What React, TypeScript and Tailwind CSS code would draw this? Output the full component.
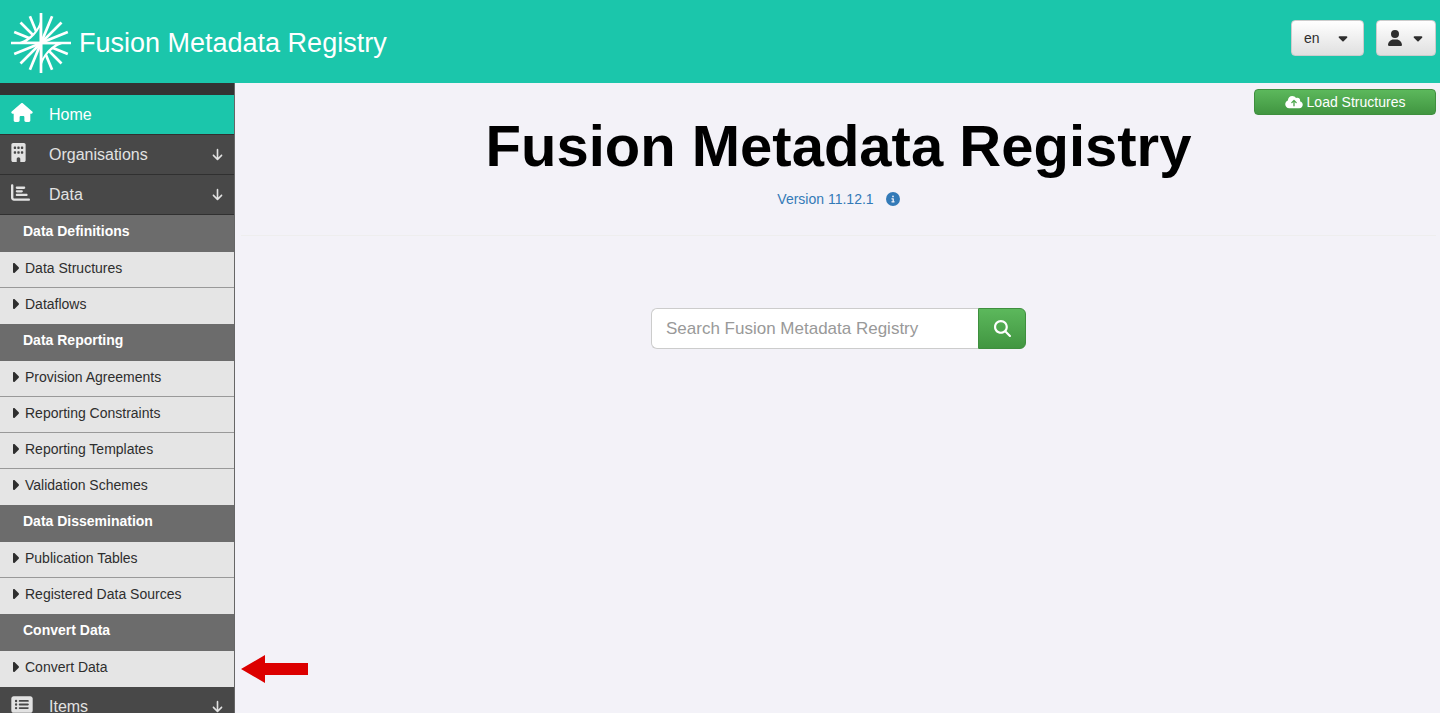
import type { ReactNode } from 'react';
import {
  FaArrowDown,
  FaBuilding,
  FaCaretDown,
  FaCaretRight,
  FaChartBar,
  FaCircleInfo,
  FaCloudArrowUp,
  FaHouse,
  FaMagnifyingGlass,
  FaRectangleList,
  FaUser,
} from 'react-icons/fa6';

interface Section {
  title: string;
  items: string[];
}

const DATA_SECTIONS: Section[] = [
  { title: 'Data Definitions', items: ['Data Structures', 'Dataflows'] },
  {
    title: 'Data Reporting',
    items: [
      'Provision Agreements',
      'Reporting Constraints',
      'Reporting Templates',
      'Validation Schemes',
    ],
  },
  { title: 'Data Dissemination', items: ['Publication Tables', 'Registered Data Sources'] },
  { title: 'Convert Data', items: ['Convert Data'] },
];

const RAYS = [22.5, 45, 67.5, 112.5, 135, 157.5, 202.5, 225, 247.5, 292.5, 315, 337.5];

function Logo() {
  return (
    <svg viewBox="0 0 60 60" className="size-[60px] shrink-0" aria-hidden="true">
      <g stroke="#fff" strokeWidth="2.7">
        {RAYS.map((a) => (
          <line key={a} x1="30" y1="27" x2="30" y2="1" transform={`rotate(${a} 30 30)`} />
        ))}
      </g>
      <circle cx="30" cy="30" r="6" fill="#fff" />
      {/* the two swept blades, each cut out in the header colour */}
      <path d="M30 2C29.5 16 19 26 6 30H30Z" fill="#fff" />
      <path d="M28.7 14.5C26 20 21.5 25 15.5 28.7H28.7Z" fill="#1bc6ab" />
      <path d="M30 58C30.5 44 41 34 54 30H30Z" fill="#fff" />
      <path d="M31.3 45.5C34 40 38.5 35 44.5 31.3H31.3Z" fill="#1bc6ab" />
      <path d="M30 0V60M0 30H60" stroke="#fff" strokeWidth="2.7" />
    </svg>
  );
}

function MenuItem({ icon, label, active }: { icon: ReactNode; label: string; active?: boolean }) {
  return (
    <a
      href="#"
      className={
        'flex h-10 items-center border-b border-[#303030] pr-2.5 pl-[11px] text-base ' +
        (active ? 'bg-[#1bc6ab] text-white' : 'bg-[#484848] text-[#e2e2e2]')
      }
    >
      <span className="w-[38px] pb-1">{icon}</span>
      <span className="flex-1">{label}</span>
      {!active && <FaArrowDown className="text-[13px]" />}
    </a>
  );
}

function PointerArrow() {
  return (
    <svg
      viewBox="0 0 67 28"
      className="absolute top-1/2 left-full ml-[7px] h-7 w-[67px] -translate-y-1/2"
      aria-hidden="true"
    >
      <path d="M0 14L24 0V8H67V20H24V28Z" fill="#dc0000" />
    </svg>
  );
}

function SubMenu({ sections }: { sections: Section[] }) {
  return (
    <div className="text-sm">
      {sections.map((s) => (
        <section key={s.title}>
          <h2 className="flex h-[37px] items-center bg-[#6c6c6c] pb-1.5 pl-[23px] font-bold text-white">
            {s.title}
          </h2>
          <ul className="divide-y divide-[#999]">
            {s.items.map((item) => (
              <li key={item} className="relative h-9 bg-[#e5e5e5]">
                <a href="#" className="flex h-full items-center pb-1 pl-2.5 text-[#2e2e2e]">
                  <span className="w-[15px]">
                    <FaCaretRight className="h-4 w-2.5" />
                  </span>
                  {item}
                </a>
                {item === 'Convert Data' && <PointerArrow />}
              </li>
            ))}
          </ul>
        </section>
      ))}
    </div>
  );
}

function Header() {
  return (
    <header className="flex h-[83px] shrink-0 items-center justify-between bg-[#1bc6ab] pr-1 pl-[11px]">
      <div className="flex items-center gap-2 pt-0.5 text-[27px] text-white">
        <Logo />
        <span className="pt-0.5">Fusion Metadata Registry</span>
      </div>
      <div className="flex gap-3 pb-2 text-sm text-[#2e2e2e]">
        <div className="relative">
          <select
            aria-label="Language"
            className="h-9 w-[73px] appearance-none rounded border border-[#ccc] bg-linear-to-b from-white to-[#e0e0e0] px-3"
          >
            <option>en</option>
          </select>
          <FaCaretDown className="pointer-events-none absolute top-1/2 right-3.5 -translate-y-1/2" />
        </div>
        <button
          type="button"
          aria-label="Account"
          className="flex h-9 w-[60px] items-center justify-between rounded border border-[#ccc] bg-linear-to-b from-white to-[#e0e0e0] px-2.5"
        >
          <FaUser className="size-4" />
          <FaCaretDown />
        </button>
      </div>
    </header>
  );
}

function Sidebar() {
  return (
    <nav className="w-[235px] shrink-0 border-r border-[#666] bg-[#333] pt-3">
      <MenuItem icon={<FaHouse className="h-[19px] w-[22px]" />} label="Home" active />
      <MenuItem icon={<FaBuilding className="h-[19px] w-[15px]" />} label="Organisations" />
      <MenuItem icon={<FaChartBar className="size-[19px]" />} label="Data" />
      <SubMenu sections={DATA_SECTIONS} />
      <MenuItem icon={<FaRectangleList className="h-[19px] w-[22px]" />} label="Items" />
    </nav>
  );
}

export default function App() {
  return (
    <div className="flex h-screen flex-col overflow-hidden bg-[#f3f2f8] font-['Liberation_Sans',Arial,sans-serif]">
      <Header />
      <div className="flex min-h-0 flex-1">
        <Sidebar />
        <main className="flex min-w-0 flex-1 flex-col pt-1.5 pr-1 pl-1.5">
          <button
            type="button"
            className="flex h-[26px] w-[182px] items-center justify-center gap-1 self-end rounded-sm border border-[#3e8f3e] bg-linear-to-b from-[#5cb85c] to-[#419641] text-sm text-white"
          >
            <FaCloudArrowUp className="h-3.5 w-[18px]" />
            Load Structures
          </button>
          <div className="flex flex-col items-center border-b border-[#eee] pb-[26px]">
            <h1 className="text-[58px] leading-[62px] font-bold text-black">
              Fusion Metadata Registry
            </h1>
            <a href="#" className="mt-3 flex items-center gap-3 text-sm text-[#337ab7]">
              Version 11.12.1
              <FaCircleInfo />
            </a>
          </div>
          <form className="mt-[72px] flex h-[41px] w-[375px] self-center">
            <input
              type="text"
              aria-label="Search Fusion Metadata Registry"
              placeholder="Search Fusion Metadata Registry"
              className="min-w-0 flex-1 rounded-l-md border border-r-0 border-[#ccc] bg-white px-3.5 text-[17px] placeholder:text-[#999]"
            />
            <button
              type="submit"
              aria-label="Search"
              className="flex w-12 items-center justify-center rounded-r-md border border-[#3e8f3e] bg-linear-to-b from-[#5cb85c] to-[#419641] text-[17px] text-white"
            >
              <FaMagnifyingGlass />
            </button>
          </form>
        </main>
      </div>
    </div>
  );
}
